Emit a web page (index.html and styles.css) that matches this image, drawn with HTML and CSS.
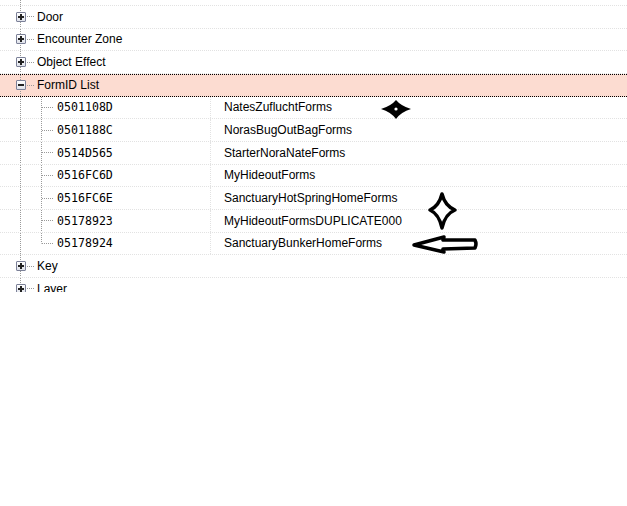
FILE: index.html
```html
<!DOCTYPE html>
<html>
<head>
<meta charset="utf-8">
<link rel="stylesheet" href="styles.css">
</head>
<body>
<div class="page">
  <div class="tree">
    <div class="stub"></div>
    <div class="row top"><span class="box plus"></span><span class="hconn"></span><span class="label">Door</span></div>
    <div class="row top"><span class="box plus"></span><span class="hconn"></span><span class="label">Encounter Zone</span></div>
    <div class="row top"><span class="box plus"></span><span class="hconn"></span><span class="label">Object Effect</span></div>
    <div class="row top selected"><span class="box minus"></span><span class="hconn"></span><span class="label">FormID List</span></div>
    <div class="row child"><span class="code">0501108D</span><span class="name">NatesZufluchtForms</span></div>
    <div class="row child"><span class="code">0501188C</span><span class="name">NorasBugOutBagForms</span></div>
    <div class="row child"><span class="code">0514D565</span><span class="name">StarterNoraNateForms</span></div>
    <div class="row child"><span class="code">0516FC6D</span><span class="name">MyHideoutForms</span></div>
    <div class="row child"><span class="code">0516FC6E</span><span class="name">SanctuaryHotSpringHomeForms</span></div>
    <div class="row child"><span class="code">05178923</span><span class="name">MyHideoutFormsDUPLICATE000</span></div>
    <div class="row child last"><span class="code">05178924</span><span class="name">SanctuaryBunkerHomeForms</span></div>
    <div class="row top"><span class="box plus"></span><span class="hconn"></span><span class="label">Key</span></div>
    <div class="row top"><span class="box plus"></span><span class="hconn"></span><span class="label">Layer</span></div>
  </div>
  <svg class="scribbles" width="627" height="506" viewBox="0 0 627 506">
    <path d="M381,109 Q391,106 396,100 Q401,106 411,109 Q401,112 396,119 Q391,112 381,109 Z" fill="#000"/>
    <circle cx="396" cy="109" r="1.6" fill="#fff"/>
    <path d="M442,194 Q445,206 455,210 Q445,214 442,228 Q439,214 430,210 Q439,206 442,194 Z" fill="#fff" stroke="#000" stroke-width="3.5" stroke-linejoin="round"/>
    <path d="M414,245 L444,237 L443,240 L475,240 Q477,244 475,248 L443,249 L444,252 Z" fill="#fff" stroke="#000" stroke-width="3.5" stroke-linejoin="round"/>
  </svg>
</div>
</body>
</html>
```
FILE: styles.css
```css
html, body {
  margin: 0;
  padding: 0;
  background: #fff;
}
.page {
  position: relative;
  width: 627px;
  height: 506px;
  overflow: hidden;
}
.tree {
  height: 292px;
  overflow: hidden;
  font-family: "Liberation Sans", Arial, sans-serif;
  font-size: 12px;
  color: #000;
}
.stub {
  height: 6px;
  background: repeating-linear-gradient(to bottom, #9a9a9a 0 1px, transparent 1px 2px) 20px 0 / 1px 100% no-repeat;
  border-bottom: 1px dotted #e2e2e2;
  box-sizing: border-box;
}
.row {
  height: 22.67px;
  box-sizing: border-box;
  display: flex;
  align-items: center;
  border-bottom: 1px dotted #e2e2e2;
}
.row.top {
  padding-left: 16px;
  background: repeating-linear-gradient(to bottom, #9a9a9a 0 1px, transparent 1px 2px) 20px 0 / 1px 100% no-repeat;
}
.row.selected {
  background-color: #fcdcd1;
  border-top: 1px dotted #000;
  border-bottom: 1px dotted #000;
}
.box {
  width: 10px;
  height: 10px;
  box-sizing: border-box;
  border: 1px solid #7c8198;
  border-radius: 1px;
  background:
    linear-gradient(#222, #222) center / 6px 2px no-repeat,
    linear-gradient(#fff, #dfe2ea);
}
.box.plus {
  background:
    linear-gradient(#222, #222) center / 6px 2px no-repeat,
    linear-gradient(#222, #222) center / 2px 6px no-repeat,
    linear-gradient(#fff, #dfe2ea);
}
.hconn {
  width: 8px;
  height: 1px;
  background: repeating-linear-gradient(to right, #9a9a9a 0 1px, transparent 1px 2px);
  margin-left: 1px;
}
.label {
  margin-left: 2px;
  white-space: nowrap;
}
.row.child {
  background:
    repeating-linear-gradient(to bottom, #9a9a9a 0 1px, transparent 1px 2px) 20px 0 / 1px 100% no-repeat,
    repeating-linear-gradient(to bottom, #9a9a9a 0 1px, transparent 1px 2px) 41px 0 / 1px 100% no-repeat,
    repeating-linear-gradient(to right, #9a9a9a 0 1px, transparent 1px 2px) 42px 50% / 12px 1px no-repeat;
}
.row.child.last {
  background:
    repeating-linear-gradient(to bottom, #9a9a9a 0 1px, transparent 1px 2px) 20px 0 / 1px 100% no-repeat,
    repeating-linear-gradient(to bottom, #9a9a9a 0 1px, transparent 1px 2px) 41px 0 / 1px 50% no-repeat,
    repeating-linear-gradient(to right, #9a9a9a 0 1px, transparent 1px 2px) 42px 50% / 12px 1px no-repeat;
}
.code {
  width: 153px;
  padding-left: 57px;
  font-family: "DejaVu Sans Mono", "Liberation Mono", monospace;
  font-size: 11.6px;
  color: #000;
}
.name {
  align-self: stretch;
  display: flex;
  align-items: center;
  padding-left: 13px;
  border-left: 1px dotted #e2e2e2;
  white-space: nowrap;
}
.scribbles {
  position: absolute;
  left: 0;
  top: 0;
  pointer-events: none;
}
```
